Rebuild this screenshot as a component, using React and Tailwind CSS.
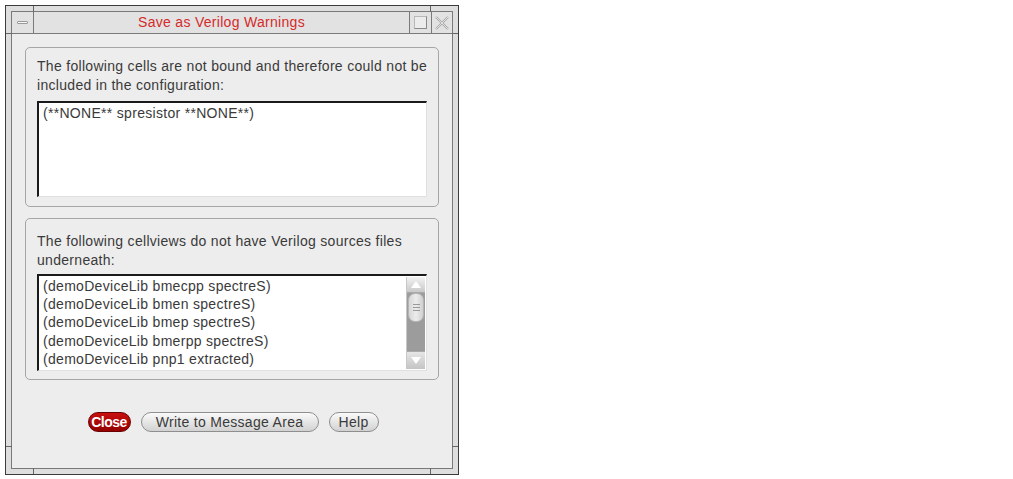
import React from "react";

const font = { fontFamily: '"Liberation Sans", Arial, sans-serif' };

function ScrollBar() {
  return (
    <div className="flex flex-col w-[19px] h-full border-l border-[#c8c8c8] bg-[#9c9c9c]">
      <div className="h-[16px] flex items-center justify-center bg-gradient-to-b from-[#f2f2f2] to-[#c9c9c9] border-b border-[#aaa]">
        <svg width="10" height="7" viewBox="0 0 10 7"><polygon points="5,0 10,7 0,7" fill="#ffffff" /></svg>
      </div>
      <div className="h-[29px] mx-[1px] rounded-[7px] bg-gradient-to-r from-[#d6d6d6] via-[#ececec] to-[#cfcfcf] border border-[#b5b5b5] flex flex-col items-center justify-center gap-[2px]">
        <div className="w-[7px] h-[1px] bg-[#999]" />
        <div className="w-[7px] h-[1px] bg-[#999]" />
        <div className="w-[7px] h-[1px] bg-[#999]" />
      </div>
      <div className="flex-1" />
      <div className="h-[18px] flex items-center justify-center bg-gradient-to-b from-[#e6e6e6] to-[#c4c4c4] border-t border-[#aaa]">
        <svg width="10" height="7" viewBox="0 0 10 7"><polygon points="0,0 10,0 5,7" fill="#ffffff" /></svg>
      </div>
    </div>
  );
}

export default function App() {
  const rows = [
    "(demoDeviceLib bmecpp spectreS)",
    "(demoDeviceLib bmen spectreS)",
    "(demoDeviceLib bmep spectreS)",
    "(demoDeviceLib bmerpp spectreS)",
    "(demoDeviceLib pnp1 extracted)",
  ];
  return (
    <div className="w-[1013px] h-[479px] bg-white overflow-hidden" style={font}>
      <div className="relative ml-[5px] mt-[5px] w-[454px] h-[470px] border border-[#3c3c3c] bg-[#dedede] p-[5px]">
        {/* frame resize ticks */}
        <div className="absolute left-[27px] top-0 w-[1px] h-[6px] bg-[#666]" />
        <div className="absolute right-[27px] top-0 w-[1px] h-[6px] bg-[#666]" />
        <div className="absolute left-[27px] bottom-0 w-[1px] h-[6px] bg-[#666]" />
        <div className="absolute right-[27px] bottom-0 w-[1px] h-[6px] bg-[#666]" />
        <div className="absolute left-0 top-[27px] w-[6px] h-[1px] bg-[#666]" />
        <div className="absolute right-0 top-[27px] w-[6px] h-[1px] bg-[#666]" />
        <div className="absolute left-0 bottom-[27px] w-[6px] h-[1px] bg-[#666]" />
        <div className="absolute right-0 bottom-[27px] w-[6px] h-[1px] bg-[#666]" />

        <div className="w-full h-full border border-[#7a7a7a] flex flex-col bg-[#ededed]">
          {/* title bar */}
          <div className="h-[22px] flex border-b border-[#7a7a7a] bg-[#e2e2e2]">
            <div className="w-[22px] border-r border-[#7a7a7a] flex items-center justify-center">
              <div className="w-[11px] h-[3px] rounded-[1px] bg-[#f6f6f6] border border-[#9a9a9a]" />
            </div>
            <div className="flex-1 flex items-center justify-center text-[14px] text-[#d52a2a] tracking-[0.3px]">
              Save as Verilog Warnings
            </div>
            <div className="w-[22px] border-l border-[#7a7a7a] flex items-center justify-center">
              <div className="w-[13px] h-[13px] border border-[#b8b8b8] border-r-[#8a8a8a] border-b-[#8a8a8a] bg-[#ececec]" />
            </div>
            <div className="w-[21px] border-l border-[#7a7a7a] flex items-center justify-center">
              <svg width="14" height="14" viewBox="0 0 14 14">
                <path d="M1 1 L13 13 M13 1 L1 13" stroke="#a8a8a8" strokeWidth="2.2" fill="none" />
                <path d="M1 1 L13 13 M13 1 L1 13" stroke="#efefef" strokeWidth="0.8" fill="none" />
              </svg>
            </div>
          </div>

          {/* client */}
          <div className="flex-1 flex flex-col px-[13px] pt-[13px]">
            <div className="border border-[#a6a6a6] rounded-[5px] px-[11px] pt-[9px] pb-[9px]">
              <div className="text-[14px] leading-[19px] tracking-[0.3px] text-[#3a3a3a] whitespace-nowrap">
                The following cells are not bound and therefore could not be
                <br />
                included in the configuration:
              </div>
              <div className="mt-[6px] h-[96px] bg-white border-t-2 border-l-2 border-t-[#1a1a1a] border-l-[#1a1a1a] border-r border-b border-r-[#e0e0e0] border-b-[#e0e0e0] pl-[4px] pt-[1px]">
                <div className="text-[14px] leading-[18px] tracking-[0.3px] text-[#3a3a3a] whitespace-nowrap">(**NONE** spresistor **NONE**)</div>
              </div>
            </div>

            <div className="mt-[11px] border border-[#a6a6a6] rounded-[5px] px-[11px] pt-[13px] pb-[8px]">
              <div className="text-[14px] leading-[19px] tracking-[0.3px] text-[#3a3a3a] whitespace-nowrap">
                The following cellviews do not have Verilog sources files
                <br />
                underneath:
              </div>
              <div className="mt-[4px] h-[97px] bg-white border-t-2 border-l-2 border-t-[#1a1a1a] border-l-[#1a1a1a] border-r border-b border-r-[#e0e0e0] border-b-[#e0e0e0] flex">
                <div className="flex-1 pl-[4px] pt-[1px]">
                  {rows.map((r) => (
                    <div key={r} className="text-[14px] leading-[18.2px] tracking-[0.3px] text-[#3a3a3a] whitespace-nowrap">{r}</div>
                  ))}
                </div>
                <div className="py-[1px] pr-[1px]">
                  <ScrollBar />
                </div>
              </div>
            </div>

            <div className="mt-[32px] flex justify-center items-center gap-[10px] pl-[2px]">
              <button className="h-[20px] w-[43px] rounded-full bg-gradient-to-b from-[#c81010] to-[#960000] border border-[#6a0000] text-white font-bold text-[14px] leading-none tracking-[-0.5px]" style={font}>
                Close
              </button>
              <button className="h-[20px] w-[178px] rounded-full bg-gradient-to-b from-[#fafafa] to-[#d2d2d2] border border-[#8e8e8e] text-[#3a3a3a] text-[14px] leading-none tracking-[0.3px]" style={font}>
                Write to Message Area
              </button>
              <button className="h-[20px] w-[50px] rounded-full bg-gradient-to-b from-[#fafafa] to-[#d2d2d2] border border-[#8e8e8e] text-[#3a3a3a] text-[14px] leading-none tracking-[0.3px]" style={font}>
                Help
              </button>
            </div>
          </div>
        </div>
      </div>
    </div>
  );
}
